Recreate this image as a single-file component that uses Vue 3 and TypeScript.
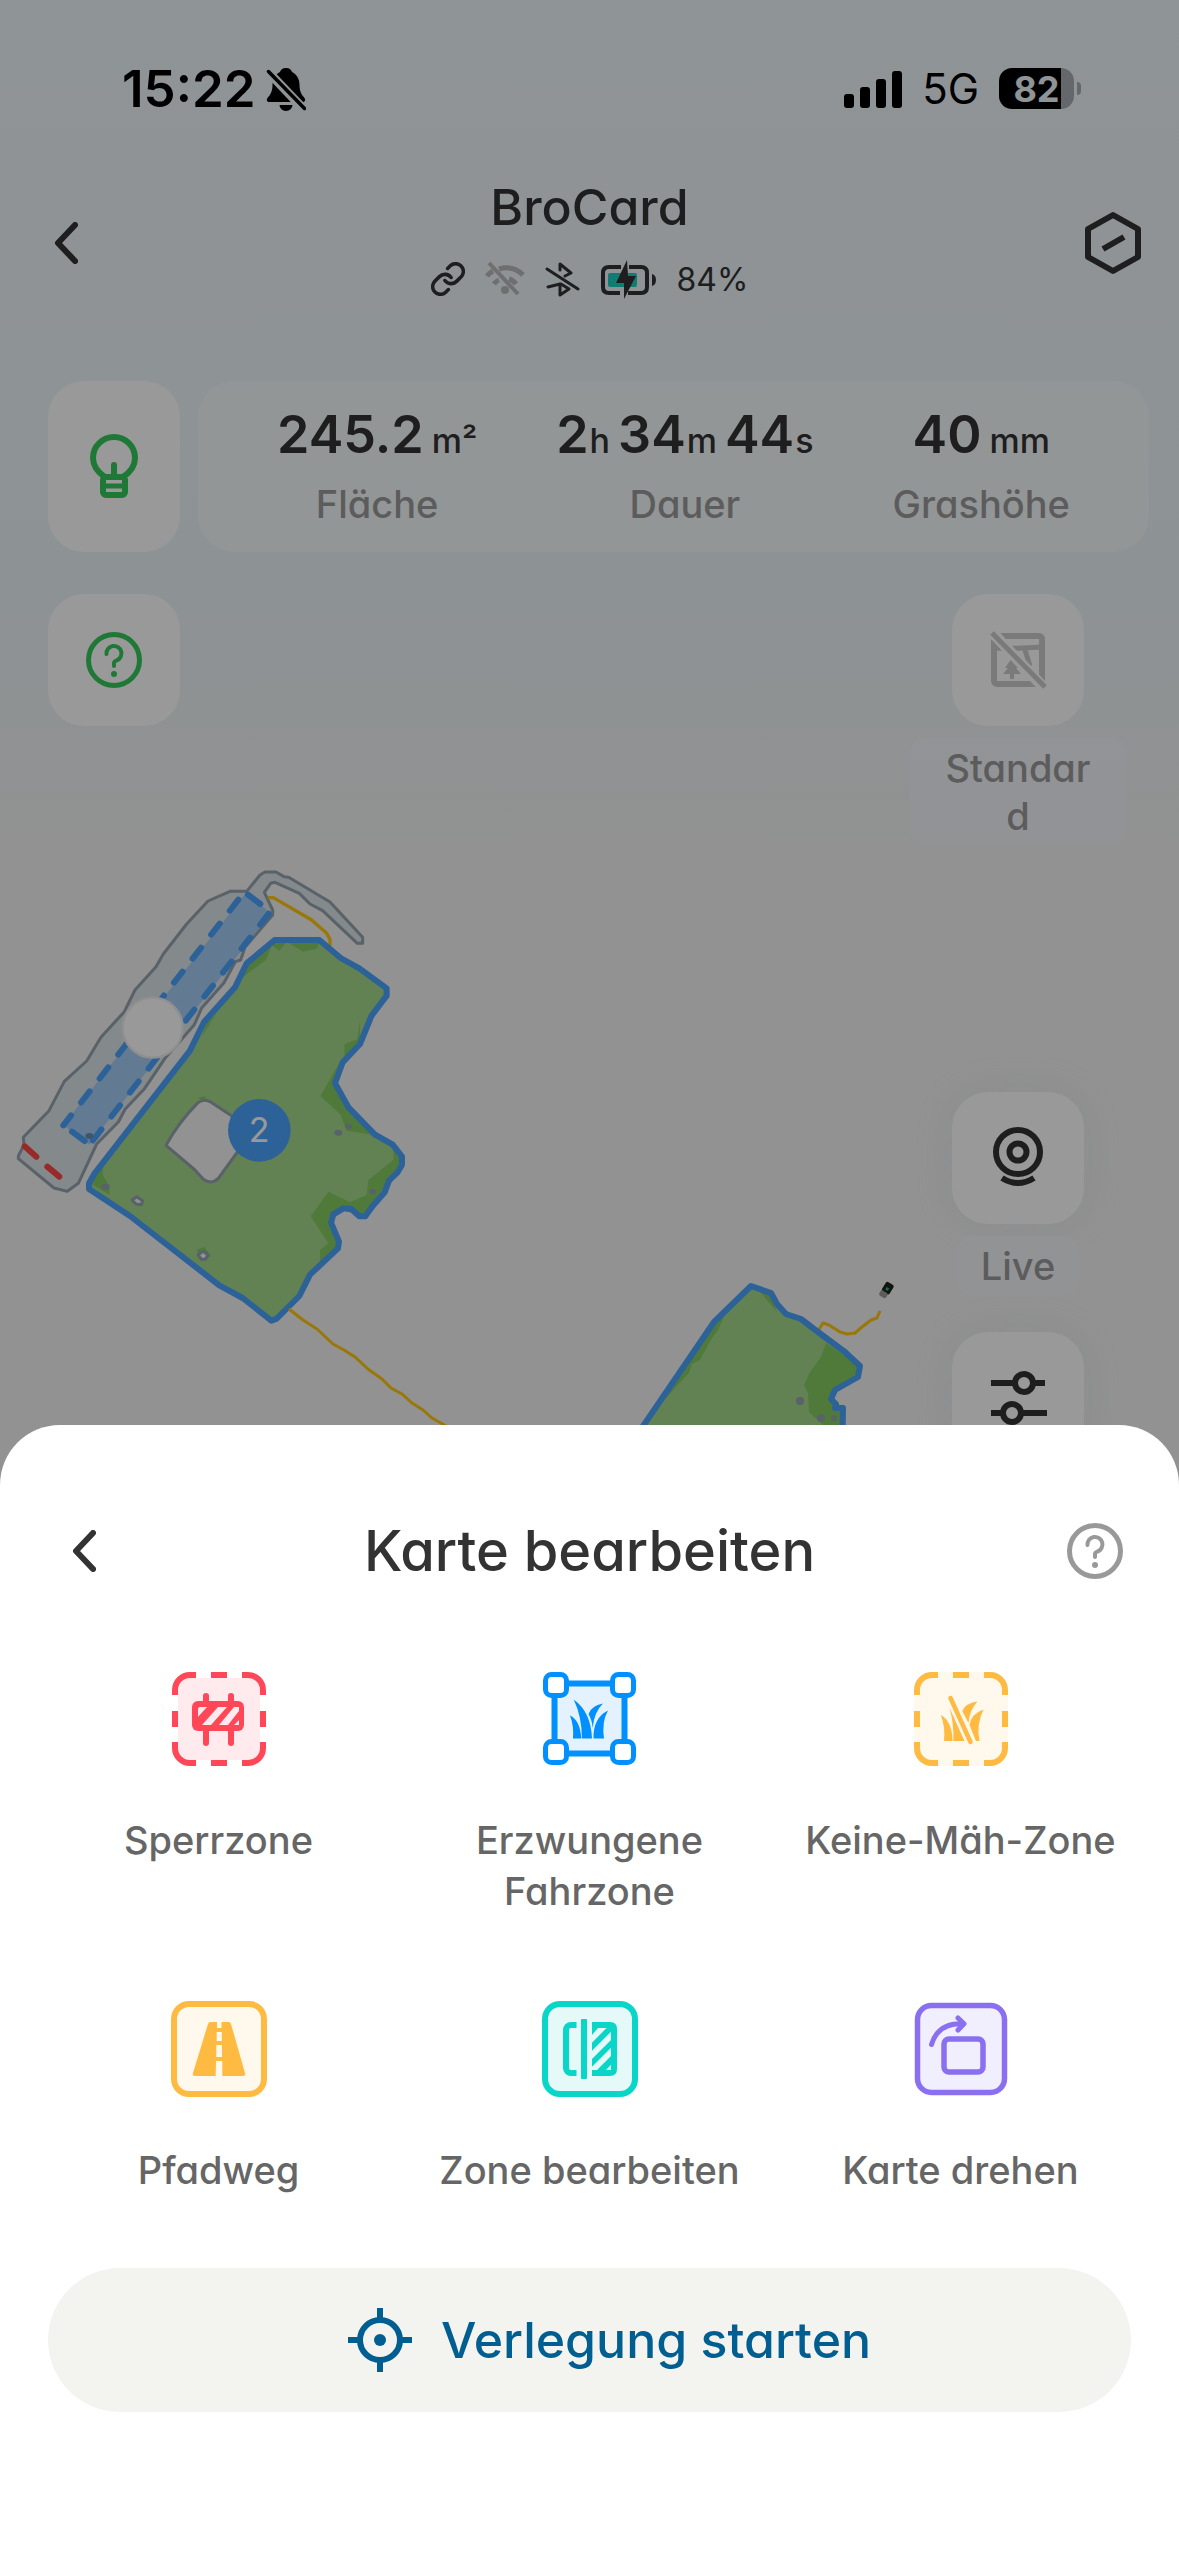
<script setup lang="ts">
interface Stat {
  label: string
  parts: { value: string; unit: string }[]
  spaced: boolean
}

interface Tool {
  id: 'forbidden' | 'forced' | 'nomow' | 'path' | 'zone' | 'rotate'
  label: string
}

const stats: Stat[] = [
  { label: 'Fläche', parts: [{ value: '245.2', unit: 'm²' }], spaced: true },
  {
    label: 'Dauer',
    parts: [
      { value: '2', unit: 'h' },
      { value: '34', unit: 'm' },
      { value: '44', unit: 's' },
    ],
    spaced: false,
  },
  { label: 'Grashöhe', parts: [{ value: '40', unit: 'mm' }], spaced: true },
]

const tools: Tool[] = [
  { id: 'forbidden', label: 'Sperrzone' },
  { id: 'forced', label: 'Erzwungene Fahrzone' },
  { id: 'nomow', label: 'Keine-Mäh-Zone' },
  { id: 'path', label: 'Pfadweg' },
  { id: 'zone', label: 'Zone bearbeiten' },
  { id: 'rotate', label: 'Karte drehen' },
]

const dashedFrame =
  'M3 23V18A15 15 0 0 1 18 3H24M39 3H55M70 3H76A15 15 0 0 1 91 18V23M91 39V55M91 70V76A15 15 0 0 1 76 91H70M55 91H39M24 91H18A15 15 0 0 1 3 76V70M3 55V39'
</script>

<template>
  <div class="app">
    <main class="home">
      <svg class="map" viewBox="0 0 1179 1460" aria-hidden="true">
        <g transform="translate(0 850) scale(0.333333)" stroke-linejoin="round" stroke-linecap="round">
          <path
            d="M740 124L780 75L795 66H828L852 80L866 82L990 156L1088 262V280H1072L968 182L930 162L898 130L825 97L812 100L793 127L818 180V195L735 292L722 330L706 335L672 398L605 474L583 524L495 625L432 718L375 778L355 816L290 882L235 1000L202 1024L162 1014L55 926V918L72 885L70 862L147 782L193 694L260 633L303 562L373 485L405 420L468 350L490 312L560 222L624 153L690 124Z"
            fill="#dde4e9" stroke="#94a3ad" stroke-width="9"
          />
          <path d="M738 128L812 190L268 884L190 826Z" fill="#a5cdf3" />
          <g fill="none" stroke="#4ba3ff" stroke-width="18">
            <path d="M715 149L190 826" stroke-dasharray="42 49" />
            <path d="M806 191L278 872" stroke-dasharray="42 49" />
            <path d="M744 134L781 162M216 845L254 873" />
          </g>
          <ellipse cx="268" cy="858" rx="12" ry="9" fill="#6b90b0" />
          <path d="M74 889L109 920M142 950L178 980" stroke="#ff4646" stroke-width="18" />
          <path d="M808 143H820L935 210L980 250L990 268V284" fill="none" stroke="#ffc610" stroke-width="10" />
          <path
            d="M824 270H958L1022 324L1078 355L1160 415V437L1114 498L1080 582L1028 637L1005 700L1046 773L1124 853L1178 884L1206 920V944L1192 968L1167 992L1154 1027L1118 1068L1096 1099H1078L1054 1077L1030 1075L1000 1093L993 1118L1017 1175L1014 1195L930 1274L898 1338L830 1406L814 1412L728 1344L658 1306L390 1098L267 1017V1000L284 970L570 602L612 516L705 412L740 340Z"
            fill="#a5d98a"
          />
          <g fill="#85cb61">
            <path d="M1020 635L961 738L1022 794L1040 843L1130 856L1046 770L1005 700ZM1080 510L1072 568L1033 582L1034 620L1080 582ZM985 1025L932 1099L985 1180L960 1200V1240L1017 1190L993 1115L1020 1078L1090 1100L1167 990L1206 930L1180 890V930L1105 990L1100 1035L1050 1057Z" />
            <path d="M820 275L738 345L730 380L798 330L815 285L838 302L860 276L910 305L950 296L960 275ZM310 940L270 1000L330 1035L326 1005L308 975ZM620 520L605 560L650 490ZM592 745L615 738L620 755ZM590 1200L612 1190L632 1215L610 1232Z" />
          </g>
          <path
            d="M824 270H958L1022 324L1078 355L1160 415V437L1114 498L1080 582L1028 637L1005 700L1046 773L1124 853L1178 884L1206 920V944L1192 968L1167 992L1154 1027L1118 1068L1096 1099H1078L1054 1077L1030 1075L1000 1093L993 1118L1017 1175L1014 1195L930 1274L898 1338L830 1406L814 1412L728 1344L658 1306L390 1098L267 1017V1000L284 970L570 602L612 516L705 412L740 340Z"
            fill="none" stroke="#4ba3ff" stroke-width="18"
          />
          <path
            d="M498 886Q535 818 594 758Q612 744 632 756L690 794L760 840L655 985Q635 1005 610 988L585 960Z"
            fill="#f3f3f3" stroke="#94a3ad" stroke-width="9"
          />
          <g fill="#f3f3f3" stroke="#94a3ad" stroke-width="9">
            <path d="M396 1050L410 1040L428 1052L424 1064L408 1062Z" />
            <path d="M594 1214L610 1203L624 1216L616 1228L604 1228Z" />
          </g>
          <g fill="#94a3ad">
            <ellipse cx="316" cy="1010" rx="13" ry="9" />
            <ellipse cx="1015" cy="848" rx="12" ry="9" />
            <ellipse cx="1046" cy="829" rx="11" ry="8" />
            <ellipse cx="1118" cy="1025" rx="10" ry="8" />
          </g>
          <circle cx="458" cy="533" r="90" fill="#fff" stroke="#eee" stroke-width="7" />
          <circle cx="778" cy="841" r="94" fill="#4ba3ff" />
        </g>
        <text class="map-number" x="259" y="1142" text-anchor="middle">2</text>

        <g fill="none" stroke="#ffc610" stroke-width="3" stroke-linejoin="round">
          <path d="M289 1309L303 1320L317 1329L333 1344L344 1350L355 1357L368 1369L382 1379L391 1388L402 1394L412 1403L423 1410L432 1418L446 1426V1440" />
          <path d="M818 1331L823 1323L829 1325L840 1332L847 1334L855 1333L862 1327L871 1320L877 1318L880 1311" />
        </g>
        <g stroke-linejoin="round">
          <path
            d="M620 1460L714 1322L751 1286L771 1293L777 1304L786 1314L801 1319L818 1332L845 1352L860 1366L858 1377L835 1390L831 1399L836 1408L843 1407L842 1460Z"
            fill="#a5d98a"
          />
          <path
            d="M826 1343L821 1357L810 1372L804 1385L808 1393L809 1412L823 1425H842L843 1407L831 1400L835 1390L858 1377L860 1366ZM727 1310L718 1330L712 1338L707 1347L700 1360L692 1364L689 1373L675 1388L660 1405L714 1322ZM760 1292L777 1312L770 1294Z"
            fill="#85cb61"
          />
          <path
            d="M620 1460L714 1322L751 1286L771 1293L777 1304L786 1314L801 1319L818 1332L845 1352L860 1366L858 1377L835 1390L831 1399L836 1404L835 1408H843L842 1460"
            fill="none" stroke="#4ba3ff" stroke-width="6"
          />
          <g fill="#94a3ad">
            <circle cx="800" cy="1401" r="4" />
            <circle cx="821" cy="1418" r="4" />
            <circle cx="834" cy="1418" r="3" />
          </g>
        </g>
        <g transform="rotate(32 886 1290)">
          <rect x="882" y="1282" width="9" height="11" rx="2" fill="#222" />
          <rect x="882" y="1292" width="8" height="6" rx="2" fill="#999" />
          <rect x="885" y="1287" width="3" height="3" fill="#20c060" />
        </g>
      </svg>

      <div class="status-bar">
        <div class="status-left">
          <span class="clock">15:22</span>
          <svg width="40" height="44" viewBox="0 0 40 44" aria-hidden="true">
            <mask id="bell-cut">
              <rect width="40" height="44" fill="#fff" />
              <path d="M0 2.500L39 43.500" stroke="#000" stroke-width="9" />
            </mask>
            <path
              d="M20 1C16.500 1 14.500 3 14 5C9 7.500 6.500 12 6.500 18C6.500 25 4 28 1.500 31C0 33 1 35 3.500 35H36.500C39 35 40 33 38.500 31C36 28 33.500 25 33.500 18C33.500 12 31 7.500 26 5C25.500 3 23.500 1 20 1ZM13.500 38H26.500A6.500 6 0 0 1 13.500 38Z"
              mask="url(#bell-cut)"
            />
            <path d="M2.500 4.500L38.500 41.500" stroke="#000" stroke-width="3.500" stroke-linecap="round" />
          </svg>
        </div>
        <div class="status-right">
          <svg width="58" height="38" viewBox="0 0 58 38" aria-hidden="true">
            <rect y="24" width="10" height="14" rx="3" />
            <rect x="16" y="17" width="10" height="21" rx="3" />
            <rect x="32" y="9" width="10" height="29" rx="3" />
            <rect x="48" y="1" width="10" height="37" rx="3" />
          </svg>
          <span class="network">5G</span>
          <div class="phone-battery"><span>82</span></div>
        </div>
      </div>

      <header class="home-header">
        <button class="icon-button" type="button" aria-label="Zurück">
          <svg width="24" height="42" viewBox="0 0 24 42" class="line"><path d="M21 3L4 21l17 18" /></svg>
        </button>
        <div class="device">
          <h1>BroCard</h1>
          <div class="device-status">
            <svg width="34" height="34" viewBox="1 1 22 22" class="line" stroke-width="2.300">
              <path d="M10 13a5 5 0 0 0 7.540.540l3-3a5 5 0 0 0-7.070-7.070l-1.720 1.710" />
              <path d="M14 11a5 5 0 0 0-7.540-.540l-3 3a5 5 0 0 0 7.070 7.070l1.710-1.710" />
            </svg>
            <svg width="40" height="36" viewBox="0 0 40 36" fill="none" stroke="#b9b9b9" stroke-width="5">
              <path d="M2 15Q4 12 8 10M14 8Q28 4 38 14M9 23Q11 20 14 19M24 18Q28 19 31 23" />
              <path d="M4 2L33 33" stroke-width="4" />
              <circle cx="20" cy="29" r="4" fill="#b9b9b9" stroke="none" />
            </svg>
            <svg width="36" height="36" viewBox="0 0 36 36" class="line" stroke-width="3">
              <path d="M2 8L33 28M15 9V3L26 12L20 15M3 26L15 23V34L24 28L16 23" />
            </svg>
            <svg width="56" height="40" viewBox="0 0 56 40" fill="none" stroke="#333" stroke-width="4">
              <path d="M20 8H8Q2 8 2 14V28Q2 34 8 34H19M28 8H40Q46 8 46 14V28Q46 34 40 34H27" />
              <rect x="7" y="14" width="29" height="14" rx="2" fill="#19d0be" stroke="none" />
              <path d="M26 1L15 24H23V40L35 17H27Z" fill="#333" stroke="none" />
              <path d="M51 15Q55 16 55 21T51 27Z" fill="#333" stroke="none" />
            </svg>
            <span>84%</span>
          </div>
        </div>
        <button class="icon-button" type="button" aria-label="Gerät">
          <svg width="60" height="64" viewBox="0 0 60 64" class="line">
            <path d="M30 4L55 18V46L30 60L5 46V18Z" />
            <path d="M20 38L41 26" stroke-linecap="butt" />
          </svg>
        </button>
      </header>

      <section class="summary">
        <button class="tile tall" type="button" aria-label="Licht">
          <svg width="64" height="66" viewBox="0 0 64 66" fill="none" stroke="#34c95a" stroke-width="6">
            <path d="M23 43Q11 35 11 24A21 21 0 0 1 53 24Q53 35 41 43" />
            <rect x="21" y="43" width="22" height="18" rx="3" />
            <path d="M21 52H43" stroke-width="5" />
            <path d="M32 31V42" stroke-linecap="round" />
          </svg>
        </button>
        <dl class="stats">
          <div v-for="stat in stats" :key="stat.label" class="stat">
            <dt>{{ stat.label }}</dt>
            <dd>
              <span v-for="part in stat.parts" :key="part.unit" class="part" :class="{ spaced: stat.spaced }">
                <b>{{ part.value }}</b><small>{{ part.unit }}</small>
              </span>
            </dd>
          </div>
        </dl>
      </section>

      <section class="map-controls">
        <button class="tile" type="button" aria-label="Hilfe">
          <svg width="56" height="56" viewBox="0 0 56 56" fill="none" stroke="#34c95a" stroke-width="5" stroke-linecap="round">
            <circle cx="28" cy="28" r="25.500" />
            <path d="M20.500 22a7.500 7.500 0 1 1 10 6.500Q28 29.500 28 31V34" stroke-width="4" />
            <circle cx="28" cy="42" r="3" fill="#34c95a" stroke="none" />
          </svg>
        </button>
        <div class="side">
          <div class="side-item wide">
            <button class="tile" type="button" aria-labelledby="map-mode">
              <svg width="58" height="60" viewBox="0 0 58 60" fill="none" stroke="#cbcbcb" stroke-width="6">
                <rect x="5" y="6" width="48" height="48" rx="3" />
                <path d="M4 18Q26 19 53 17M36 20L41 36" stroke-width="5" />
                <path d="M23 28L30 38H27L32 44H25V49H21V44H14L19 38H16Z" fill="#cbcbcb" stroke="none" />
                <path d="M1 0L57 60" stroke="#fff" stroke-width="11" />
                <path d="M3 3L56 57" stroke-width="5" />
              </svg>
            </button>
            <span id="map-mode" class="tag">Standard</span>
          </div>
          <div class="side-group">
            <div class="side-item">
              <button class="tile raised" type="button" aria-labelledby="live-tag">
                <svg width="60" height="64" viewBox="0 0 60 64" class="line">
                  <circle cx="30" cy="26" r="22" />
                  <circle cx="30" cy="26" r="8.500" />
                  <path d="M14 52Q30 62 46 52" stroke-linecap="butt" />
                </svg>
              </button>
              <span id="live-tag" class="tag">Live</span>
            </div>
            <button class="tile raised" type="button" aria-label="Einstellungen">
              <svg width="60" height="60" viewBox="0 0 60 60" class="line">
                <path d="M3 15H27M45 15H57M3 45H15M33 45H59" stroke-linecap="butt" />
                <circle cx="36" cy="15" r="9" />
                <circle cx="24" cy="45" r="9" />
              </svg>
            </button>
          </div>
        </div>
      </section>
    </main>

    <div class="scrim"></div>

    <section class="sheet" role="dialog" aria-labelledby="sheet-title">
      <header class="sheet-header">
        <button class="icon-button" type="button" aria-label="Zurück">
          <svg width="24" height="42" viewBox="0 0 24 42" class="line"><path d="M21 3L4 21l17 18" /></svg>
        </button>
        <h2 id="sheet-title">Karte bearbeiten</h2>
        <button class="icon-button" type="button" aria-label="Hilfe">
          <svg width="56" height="56" viewBox="0 0 56 56" fill="none" stroke="#999" stroke-width="5" stroke-linecap="round">
            <circle cx="28" cy="28" r="25.500" />
            <path d="M20.500 22a7.500 7.500 0 1 1 10 6.500Q28 29.500 28 31V34" stroke-width="4" />
            <circle cx="28" cy="42" r="3" fill="#999" stroke="none" />
          </svg>
        </button>
      </header>

      <div class="tools">
        <button v-for="tool in tools" :key="tool.id" class="tool" type="button">
          <svg v-if="tool.id === 'forbidden'" width="96" height="96" viewBox="-1 -1 96 96">
            <rect x="6" y="6" width="82" height="82" rx="12" fill="#ffebee" />
            <path :d="dashedFrame" fill="none" stroke="#ff4757" stroke-width="6" />
            <path d="M34 24V71M59 24V71" stroke="#ff4757" stroke-width="6" stroke-linecap="round" />
            <rect x="20" y="29" width="52" height="30" rx="6" fill="#ff4757" />
            <path
              d="M26 37Q26 35 28 35H35L26 45ZM46 35H55L39 53H30ZM62 35H67V39L56 53H47ZM67 48V53H62Z"
              fill="#ffebee"
            />
          </svg>
          <svg v-else-if="tool.id === 'forced'" width="96" height="96" viewBox="-1 -1 96 96">
            <rect x="11.500" y="11.500" width="70" height="70" fill="#e3f2fe" stroke="#0090ff" stroke-width="6" />
            <g fill="#fff" stroke="#0090ff" stroke-width="5">
              <rect x="2.500" y="2.500" width="21" height="21" rx="6" />
              <rect x="69.500" y="2.500" width="21" height="21" rx="6" />
              <rect x="2.500" y="69.500" width="21" height="21" rx="6" />
              <rect x="69.500" y="69.500" width="21" height="21" rx="6" />
            </g>
            <path
              d="M27 43.500Q37 48 38.300 66.500H30Q31 54 27 43.500ZM30.700 27.500Q48 40 49 66.500H38.900Q39 45 30.700 27.500ZM60 31.500Q48 34 45.500 42Q49 48 49.700 56Q51 40 60 31.500ZM65 38.500Q50 46 50.500 66.500H61Q58.500 50 65 38.500Z"
              fill="#0090ff"
            />
          </svg>
          <svg v-else-if="tool.id === 'nomow'" width="96" height="96" viewBox="-1 -1 96 96">
            <path d="M18 0H76A18 18 0 0 1 94 18V76A18 18 0 0 1 76 94H18A18 18 0 0 1 0 76V18A18 18 0 0 1 18 0Z" fill="#fff8ec" />
            <path :d="dashedFrame" fill="none" stroke="#ffbb41" stroke-width="6" />
            <path
              d="M26.800 43Q38 49 38.600 69H30Q31.500 55 26.800 43ZM35.600 36L50.500 69H39.400Q40 52 35.600 36ZM63.500 29.500Q51 31 48.200 39L54.500 51Q55.500 38 63.500 29.500ZM69.500 37.500Q57 42 55.500 53L62 69H65.500Q62 53 69.500 37.500Z"
              fill="#ffbb41"
            />
            <path d="M36.500 26L56.500 70" stroke="#ffbb41" stroke-width="4.500" stroke-linecap="round" />
          </svg>
          <svg v-else-if="tool.id === 'path'" width="96" height="96" viewBox="0 0 96 96">
            <rect x="3" y="3" width="90" height="90" rx="15" fill="#fff8ec" stroke="#ffbb41" stroke-width="6" />
            <path d="M37 23Q37.500 21 39.500 21H57.500Q59.500 21 60 23L74 72Q75 75 72 75H24Q21 75 22 72Z" fill="#ffbb41" />
            <path d="M46 21H50.500V27H46ZM45.700 31H50.800V40H45.700ZM45.300 44H51V56H45.300ZM45 60H51.300V75H44.700Z" fill="#fff8ec" />
          </svg>
          <svg v-else-if="tool.id === 'zone'" width="96" height="96" viewBox="0 0 96 96">
            <rect x="3" y="3" width="90" height="90" rx="15" fill="#e4f9f8" stroke="#0ad6c8" stroke-width="6" />
            <path d="M34.500 24H29a5 5 0 0 0-5 5V67a5 5 0 0 0 5 5H34.500" fill="none" stroke="#0ad6c8" stroke-width="6" />
            <rect x="39" y="18" width="6" height="60" rx="1" fill="#0ad6c8" />
            <path d="M50 21H68Q75 21 75 28V68Q75 75 68 75H50Z" fill="#0ad6c8" />
            <path
              d="M50 34L56 27H64.500L50 41.700ZM50 49.700L69 30.700V39L50 58ZM50 65.700L69 46.700V55L55 69H50ZM69 63.700V69H64Z"
              fill="#e4f9f8"
            />
          </svg>
          <svg v-else width="96" height="96" viewBox="0 0 96 96" fill="none" stroke="#8a70f0" stroke-linecap="round" stroke-linejoin="round">
            <rect x="4.500" y="4.500" width="87" height="87" rx="14" fill="#f1effd" stroke-width="5.500" />
            <rect x="31" y="38" width="39" height="33" rx="5" stroke-width="5.500" />
            <path d="M18.500 43.500Q25 22 49 22.700M45 17L51 22.700L45 29" stroke-width="5" />
          </svg>
          <span>{{ tool.label }}</span>
        </button>
      </div>

      <button class="start" type="button">
        <svg width="64" height="64" viewBox="0 0 64 64" fill="none" stroke="#005e90" stroke-width="6" aria-hidden="true">
          <circle cx="32" cy="32" r="20" />
          <path d="M32 0V12M32 52V64M0 32H12M52 32H64" />
          <circle cx="32" cy="32" r="6" fill="#005e90" stroke="none" />
        </svg>
        <span>Verlegung starten</span>
      </button>
    </section>
  </div>
</template>

<style>
body {
  margin: 0;
}
</style>

<style scoped>
.app {
  display: grid;
  min-height: 100vh;
  overflow: hidden;
  font-family: Inter, 'Liberation Sans', sans-serif;
  font-feature-settings: 'cv11';
  color: #333;
}

.home,
.scrim,
.sheet {
  grid-area: 1 / 1;
}

.scrim {
  position: relative;
  background: rgba(0, 0, 0, 0.4);
}

.sheet {
  position: relative;
  align-self: end;
}

button {
  margin: 0;
  padding: 0;
  border: 0;
  background: none;
  font: inherit;
  font-feature-settings: inherit;
  color: inherit;
}

svg {
  display: block;
  flex: none;
}

.line {
  fill: none;
  stroke: #333;
  stroke-linecap: round;
  stroke-linejoin: round;
}

.line:not([stroke-width]) {
  stroke-width: 6px;
}

.home {
  position: relative;
  background: linear-gradient(#eff7fc 0, #ecf4f8 600px, #f3f3f3 860px);
}

.map {
  position: absolute;
  top: 0;
  left: 0;
  width: 100%;
}

.map-number {
  font-size: 34px;
  fill: #fff;
}

.status-bar {
  position: relative;
  display: flex;
  justify-content: space-between;
  align-items: center;
  height: 177px;
  padding: 0 105px 0 122px;
  box-sizing: border-box;
  color: #000;
}

.status-left,
.status-right {
  display: flex;
  align-items: center;
}

.status-left {
  gap: 11px;
}

.status-right {
  gap: 20px;
}

.clock {
  font-size: 51px;
  font-weight: 600;
}

.network {
  font-size: 42px;
}

.phone-battery {
  position: relative;
  width: 75px;
  height: 41px;
  border-radius: 13px;
  background: linear-gradient(90deg, #000 62px, #a8adb1 62px);
  display: flex;
  align-items: center;
  justify-content: center;
  font-size: 36px;
  font-weight: 700;
  color: #eff7fc;
}

.phone-battery::after {
  content: '';
  position: absolute;
  right: -7px;
  top: 14px;
  width: 4px;
  height: 13px;
  border-radius: 0 6px 6px 0;
  background: #a8adb1;
}

.home-header,
.sheet-header {
  position: relative;
  display: flex;
  justify-content: space-between;
  align-items: center;
}

.home-header {
  padding: 0 36px;
}

.icon-button {
  display: flex;
  align-items: center;
  justify-content: center;
  width: 60px;
  height: 72px;
}

.device {
  display: flex;
  flex-direction: column;
  align-items: center;
  gap: 12px;
}

h1,
h2,
dl,
dd {
  margin: 0;
}

h1 {
  font-size: 50px;
  line-height: 60px;
  font-weight: 500;
}

.device-status {
  display: flex;
  align-items: center;
  gap: 20px;
  height: 60px;
  font-size: 32px;
}

.summary {
  position: relative;
  display: flex;
  gap: 18px;
  padding: 72px 30px 0 48px;
}

.tile {
  display: flex;
  align-items: center;
  justify-content: center;
  flex: none;
  width: 132px;
  height: 132px;
  border-radius: 36px;
  background: #fff;
}

.tall {
  height: 171px;
}

.raised {
  box-shadow: 0 0 36px rgba(190, 205, 225, 0.2);
}

.stats {
  flex: 1;
  display: flex;
  justify-content: space-evenly;
  border-radius: 36px;
  background: rgba(255, 255, 255, 0.5);
}

.stat {
  display: flex;
  flex-direction: column-reverse;
  justify-content: center;
  align-items: center;
  gap: 3px;
  padding-bottom: 6px;
}

dt,
.tag {
  font-size: 38px;
  line-height: 48px;
  font-weight: 500;
  color: #999;
}

dd {
  display: flex;
  gap: 8px;
  line-height: 72px;
}

.part {
  display: flex;
  align-items: baseline;
  gap: 1px;
}

.spaced {
  gap: 8px;
}

.part b {
  font-size: 52px;
  font-weight: 600;
}

.part small {
  font-size: 34px;
  font-weight: 500;
}

.map-controls {
  position: relative;
  display: flex;
  justify-content: space-between;
  align-items: flex-start;
  padding: 42px 53px 0 48px;
}

.side {
  display: flex;
  flex-direction: column;
  align-items: center;
  gap: 246px;
}

.side-group {
  display: flex;
  flex-direction: column;
  align-items: center;
  gap: 36px;
}

.side-item {
  display: flex;
  flex-direction: column;
  align-items: center;
  gap: 12px;
}

.tag {
  box-sizing: border-box;
  padding: 6px 24px;
  border-radius: 15px;
  background: rgba(246, 249, 255, 0.5);
  text-align: center;
}

.wide .tag {
  width: 216px;
  padding: 6px 30px;
  word-break: break-all;
}

.sheet {
  padding: 90px 0 144px;
  border-radius: 60px 60px 0 0;
  background: #fff;
}

.sheet-header {
  padding: 0 54px;
}

h2 {
  font-size: 56px;
  line-height: 72px;
  font-weight: 500;
}

.tools {
  display: grid;
  grid-template-columns: repeat(3, 1fr);
  gap: 84px 0;
  padding: 84px 33px 72px;
}

.tool {
  display: flex;
  flex-direction: column;
  align-items: center;
  gap: 48px;
  font-size: 38px;
  line-height: 51px;
  font-weight: 500;
  color: #666;
}

.tool span {
  max-width: 330px;
}

.start {
  display: flex;
  align-items: center;
  justify-content: center;
  gap: 29px;
  width: calc(100% - 96px);
  height: 144px;
  margin: 0 48px;
  padding-left: 40px;
  border-radius: 72px;
  background: #f3f4f0;
  font-size: 50px;
  font-weight: 500;
  color: #005e90;
}
</style>
